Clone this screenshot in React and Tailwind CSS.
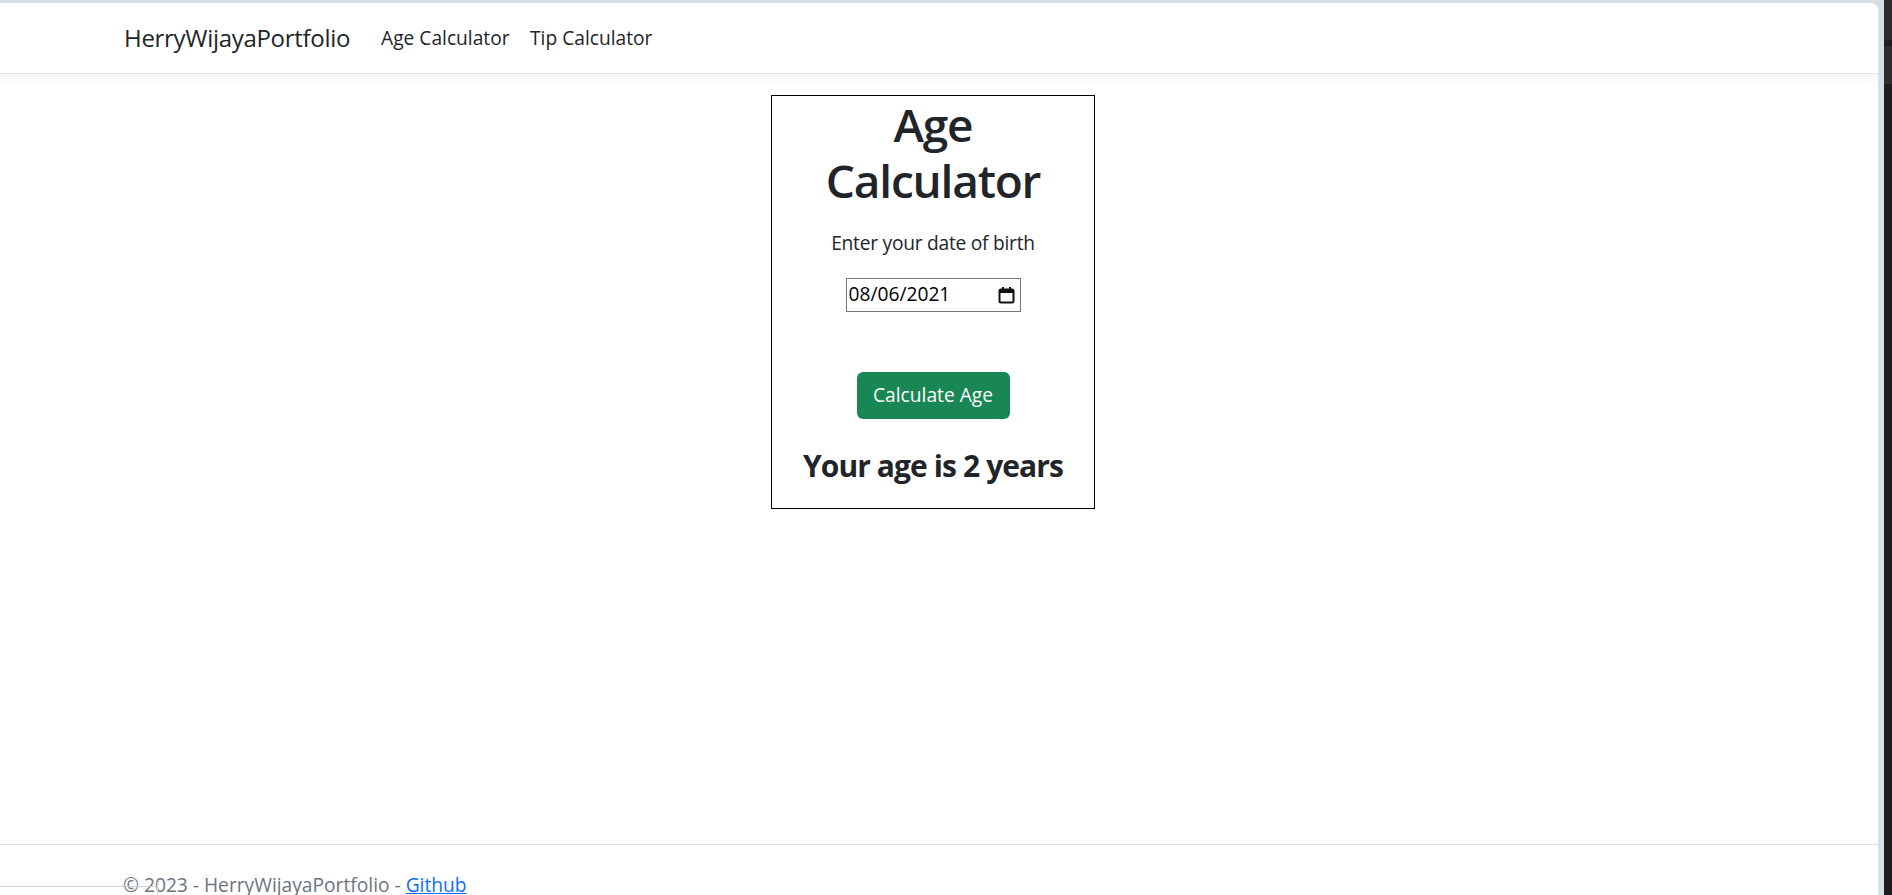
export default function App() {
  return (
    <div className="relative flex h-[895px] w-[1892px] overflow-hidden bg-[#d6dee6] font-['Open_Sans',sans-serif] text-[#212529]">
      <div className="flex w-[1884px] flex-col pt-[3px] pr-[6px]">
        <div className="flex flex-1 flex-col overflow-hidden rounded-tr-[8px] bg-white">
          <nav className="relative z-10 flex h-[71px] shrink-0 items-center border-b border-[#dee2e6] bg-white pl-[124px] shadow-[0_5px_14px_rgba(0,0,0,0.05)]">
            <a className="mr-[33px] w-[224px] whitespace-nowrap text-[24px] leading-[36px] tracking-[-0.3px]">HerryWijayaPortfolio</a>
            <a className="mr-[22px] w-[127px] whitespace-nowrap text-[19.2px] leading-[28.8px]">Age Calculator</a>
            <a className="w-[120px] whitespace-nowrap text-[19.2px] leading-[28.8px]">Tip Calculator</a>
          </nav>

          <main className="h-[770px] shrink-0 pt-[21px]">
            <div className="ml-[771px] flex h-[414px] w-[324px] flex-col items-center border border-black text-center">
              <h1 className="text-[46px] font-semibold leading-[56px] tracking-[-1.2px]">
                Age
                <br />
                Calculator
              </h1>
              <p className="mt-[21px] text-[19.2px] leading-[28.8px] tracking-[-0.25px]">Enter your date of birth</p>
              <div className="mt-[20px] flex h-[34px] w-[175px] items-center justify-between border border-[#767676] pl-[2px] pr-[5px] text-[19.2px] text-black">
                <span>08/06/2021</span>
                <svg width="17" height="18" viewBox="0 0 17 18" fill="none">
                  <rect x="1.5" y="3.5" width="14" height="13" rx="1.5" stroke="#111" strokeWidth="2" />
                  <rect x="1.5" y="3.5" width="14" height="3.5" fill="#111" />
                  <rect x="4" y="1" width="2" height="3" fill="#111" />
                  <rect x="11" y="1" width="2" height="3" fill="#111" />
                </svg>
              </div>
              <button className="mt-[60px] h-[47px] w-[153px] rounded-[6px] bg-[#198754] text-[19.2px] text-white">
                Calculate Age
              </button>
              <h3 className="mt-[28px] whitespace-nowrap text-[30px] font-bold leading-[37px] tracking-[-0.9px]">Your age is 2 years</h3>
            </div>
          </main>

          <footer className="shrink-0 border-t border-[#dee2e6] pl-[123px] text-[19.2px] leading-[79px] whitespace-nowrap text-[#6c757d]">
            © 2023 - HerryWijayaPortfolio - <a className="text-[#0d6efd] underline">Github</a>
          </footer>
        </div>
      </div>

      <div className="flex w-[8px] flex-col bg-[#1d1d1d]">
        <div className="h-[40px] bg-[#2e2e2e]" />
        <div className="h-[6px]" />
        <div className="h-[38px] bg-[#2e2e2e]" />
      </div>

      <div className="absolute left-0 top-[886px] h-px w-[157px] bg-[#cfcfcf]" />
      <div className="absolute left-[157px] top-[882px] h-[13px] w-px bg-[#cfcfcf]" />
    </div>
  )
}
